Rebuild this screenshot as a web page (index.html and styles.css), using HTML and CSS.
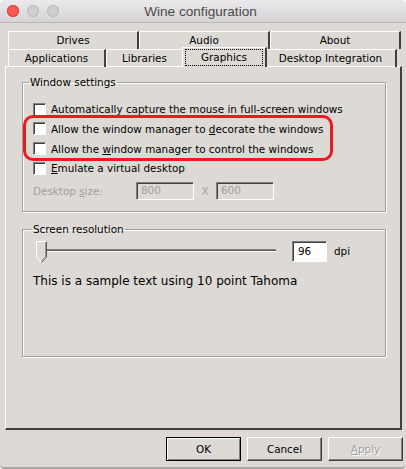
FILE: index.html
```html
<!DOCTYPE html>
<html>
  <head>
    <meta charset="utf-8" />
    <title>Wine configuration</title>
    <link rel="stylesheet" href="styles.css">
  </head>
  <body>
    <div class="window">
      <div class="titlebar">
        <div class="lights">
          <span class="light close"></span>
          <span class="light"></span>
          <span class="light"></span>
        </div>
        <div class="title">Wine configuration</div>
      </div>

      <div class="tabs">
        <div class="tab-row">
          <div class="tab w131">Drives</div>
          <div class="tab w131">Audio</div>
          <div class="tab w131">About</div>
        </div>
        <div class="tab-row">
          <div class="tab w98">Applications</div>
          <div class="tab w78">Libraries</div>
          <div class="tab selected w85"><span class="focus">Graphics</span></div>
          <div class="tab w132">Desktop Integration</div>
        </div>
      </div>

      <div class="panel">
        <fieldset class="group settings">
          <legend>Window settings</legend>
          <div class="check"><span class="box"></span><span>Automatically capture the mouse in full-screen windows</span></div>
          <div class="check"><span class="box"></span><span>Allow the window manager to <u>d</u>ecorate the windows</span></div>
          <div class="check"><span class="box"></span><span>Allow the <u>w</u>indow manager to control the windows</span></div>
          <div class="check"><span class="box"></span><span><u>E</u>mulate a virtual desktop</span></div>
          <div class="size-row">
            <span class="size-label">Desktop <u>s</u>ize:</span>
            <span class="field disabled">800</span>
            <span class="x">X</span>
            <span class="field disabled">600</span>
          </div>
          <div class="highlight"></div>
        </fieldset>

        <fieldset class="group resolution">
          <legend>Screen resolution</legend>
          <div class="slider-row">
            <div class="slider">
              <svg class="thumb" width="11" height="22" viewBox="0 0 11 22">
                <path d="M0.5 0.5 H10.5 V16 L5.5 21.5 L0.5 16 Z" fill="#dddad5" stroke="#ffffff"/>
                <path d="M10.5 0.5 V16 L5.5 21.5" fill="none" stroke="#555"/>
                <path d="M9.5 1.5 V15.6 L5.5 20" fill="none" stroke="#999"/>
              </svg>
              <div class="track"></div>
            </div>
            <span class="field dpi">96</span>
            <span class="unit">dpi</span>
          </div>
          <p class="sample">This is a sample text using 10 point Tahoma</p>
        </fieldset>
      </div>

      <div class="buttons">
        <button class="btn default">OK</button>
        <button class="btn">Cancel</button>
        <button class="btn" disabled><u>A</u>pply</button>
      </div>
    </div>
  </body>
</html>
```

FILE: styles.css
```css
html, body {
  margin: 0;
  padding: 0;
  background: #ffffff;
}

body {
  font-family: "DejaVu Sans", Verdana, sans-serif;
  font-size: 10.4px;
  color: #000;
}

u {
  text-decoration: underline;
  text-underline-offset: 1px;
}

.window {
  width: 406px;
  height: 469px;
  background: #dddad5;
  border-radius: 5px 5px 4px 4px;
  overflow: hidden;
  box-sizing: border-box;
  border-bottom: 2px solid #a9a7a4;
}

/* mac title bar */
.titlebar {
  height: 23px;
  display: flex;
  align-items: center;
  background: linear-gradient(#ebe9eb, #d5d3d5);
  border-bottom: 1px solid #b8b6b8;
  box-sizing: border-box;
}

.lights {
  display: flex;
  gap: 8px;
  padding-left: 7px;
}

.light {
  width: 12px;
  height: 12px;
  border-radius: 50%;
  background: #cfcdcf;
  box-shadow: inset 0 0 0 1px #bdbbbd;
}

.light.close {
  background: #fc5753;
  box-shadow: inset 0 0 0 1px #df3e3a;
}

.title {
  flex: 1;
  text-align: center;
  margin-right: 64px;
  font-family: "Liberation Sans", Arial, sans-serif;
  font-size: 13.6px;
  color: #4c4c4c;
}

/* tabs */
.tabs {
  padding: 8px 0 0 8px;
}

.tab-row {
  display: flex;
  height: 17px;
}

.tab-row + .tab-row {
  margin-top: 1px;
}

.tab {
  box-sizing: border-box;
  height: 18px;
  border-top: 1px solid #ffffff;
  border-left: 1px solid #ffffff;
  border-right: 2px solid #404040;
  border-top-left-radius: 2px;
  text-align: center;
  line-height: 16px;
  color: #000;
}

.w131 { width: 131px; }
.w98 { width: 98px; }
.w78 { width: 78px; }
.w85 { width: 85px; }
.w132 { width: 132px; }

.tab.selected {
  height: 20px;
  margin: -2px -2px 0;
  position: relative;
  z-index: 1;
  background: #dddad5;
  padding: 1px 2px 0;
}

.focus {
  display: block;
  border: 1px dotted #000;
  line-height: 15px;
}

/* main panel */
.panel {
  margin: 0 4px 0 5px;
  height: 364px;
  box-sizing: border-box;
  border-top: 1px solid #ffffff;
  border-left: 1px solid #ffffff;
  border-right: 2px solid #404040;
  border-bottom: 2px solid #404040;
  padding: 9px 14px 0 16px;
}

.group {
  margin: 0;
  border: 1px solid #a0a0a0;
  box-shadow: 1px 1px 0 #ffffff, inset 1px 1px 0 #ffffff;
  position: relative;
  box-sizing: border-box;
}

.group legend {
  padding: 0 1px;
  margin-left: -4px;
  color: #000;
}

.settings {
  height: 136px;
  padding: 11px 0 0 10px;
}

.check {
  display: flex;
  align-items: center;
  height: 20px;
}

.check + .check {
  margin-top: -0.2px;
}

.box {
  width: 11px;
  height: 11px;
  margin-right: 5px;
  background: #ffffff;
  border-top: 1px solid #808080;
  border-left: 1px solid #808080;
  border-right: 1px solid #ffffff;
  border-bottom: 1px solid #ffffff;
  box-shadow: inset 1px 1px 0 #404040;
  flex: none;
}

.size-row {
  display: flex;
  align-items: center;
  height: 22px;
  color: #a0a0a0;
  margin-top: 2px;
}

.size-label {
  width: 103px;
}

.field {
  box-sizing: border-box;
  height: 18px;
  line-height: 15px;
  padding-left: 4px;
  border-top: 1px solid #808080;
  border-left: 1px solid #808080;
  border-right: 1px solid #ffffff;
  border-bottom: 1px solid #ffffff;
  box-shadow: inset 1px 1px 0 #404040;
  background: #ffffff;
  color: #000;
}

.field.disabled {
  width: 58px;
  background: #dddad5;
  color: #a0a0a0;
}

.x {
  width: 22px;
  text-align: center;
}

.highlight {
  position: absolute;
  left: 0;
  top: 27px;
  width: 310px;
  height: 46px;
  box-sizing: border-box;
  border: 3px solid #eb1a20;
  border-radius: 10px;
}

.resolution {
  margin-top: 11px;
  height: 134px;
  padding: 6px 0 0 13px;
}

.slider-row {
  display: flex;
  align-items: flex-start;
  height: 24px;
}

.slider {
  display: flex;
  align-items: flex-start;
  width: 240px;
}

.thumb {
  display: block;
}

.track {
  flex: 1;
  height: 3px;
  margin-top: 8px;
  border-top: 1px solid #808080;
  background: #606060;
  box-sizing: border-box;
  border-bottom: 1px solid #ffffff;
}

.field.dpi {
  width: 35px;
  height: 21px;
  line-height: 18px;
  margin-left: 16px;
  padding-left: 5px;
}

.unit {
  margin-left: 7px;
  line-height: 20px;
}

.sample {
  margin: 9px 0 0 -3px;
  font-size: 12px;
}

/* bottom buttons */
.buttons {
  display: flex;
  justify-content: flex-end;
  gap: 6px;
  padding: 7px 3px 0 0;
}

.btn {
  width: 75px;
  height: 24px;
  font-family: inherit;
  font-size: 10.4px;
  color: #000;
  background: #dddad5;
  border-top: 1px solid #ffffff;
  border-left: 1px solid #ffffff;
  border-right: 1px solid #404040;
  border-bottom: 1px solid #404040;
  box-shadow: inset -1px -1px 0 #808080;
  padding: 0;
}

.btn.default {
  border: 1px solid #000;
  box-shadow: inset 1px 1px 0 #ffffff, inset -1px -1px 0 #808080;
}

.btn:disabled {
  color: #a0a0a0;
  text-shadow: 1px 1px 0 #ffffff;
}
```
